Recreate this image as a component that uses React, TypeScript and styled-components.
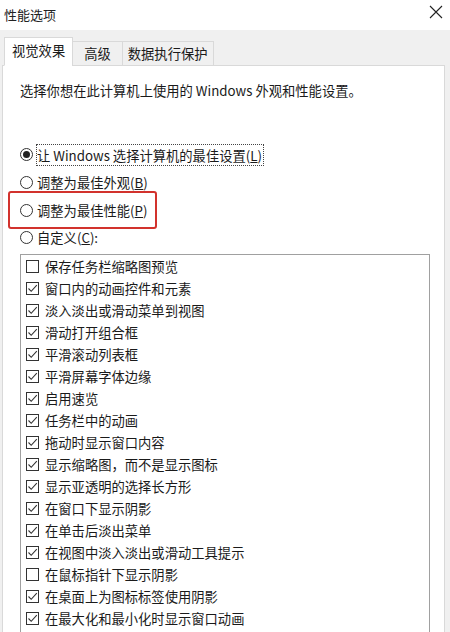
import styled, { createGlobalStyle } from 'styled-components';

const GlobalStyle = createGlobalStyle`
    html, body {
        margin: 0;
        padding: 0;
        width: 450px;
        height: 632px;
        overflow: hidden;
        background: #f0f0f0;
        font-family: "Noto Sans CJK SC", "Noto Sans", sans-serif;
        color: #1a1a1a;
    }
`;

const effects = [
    { label: '保存任务栏缩略图预览', checked: false },
    { label: '窗口内的动画控件和元素', checked: true },
    { label: '淡入淡出或滑动菜单到视图', checked: true },
    { label: '滑动打开组合框', checked: true },
    { label: '平滑滚动列表框', checked: true },
    { label: '平滑屏幕字体边缘', checked: true },
    { label: '启用速览', checked: true },
    { label: '任务栏中的动画', checked: true },
    { label: '拖动时显示窗口内容', checked: true },
    { label: '显示缩略图，而不是显示图标', checked: true },
    { label: '显示亚透明的选择长方形', checked: true },
    { label: '在窗口下显示阴影', checked: true },
    { label: '在单击后淡出菜单', checked: true },
    { label: '在视图中淡入淡出或滑动工具提示', checked: true },
    { label: '在鼠标指针下显示阴影', checked: false },
    { label: '在桌面上为图标标签使用阴影', checked: true },
    { label: '在最大化和最小化时显示窗口动画', checked: true },
];

export default function App() {
    return (
        <>
            <GlobalStyle />
            <Window>
                <TitleBar>
                    <Title>性能选项</Title>
                    <CloseButton>
                        <svg width="14" height="14" viewBox="0 0 14 14">
                            <path d="M1 1 L13 13 M13 1 L1 13" stroke="#222" strokeWidth="1.1" />
                        </svg>
                    </CloseButton>
                </TitleBar>
                <Body>
                    <TabStrip>
                        <Tab $active $pad={7}>视觉效果</Tab>
                        <Tab $pad={11}>高级</Tab>
                        <Tab $pad={5}>数据执行保护</Tab>
                    </TabStrip>
                    <Panel>
                        <Description>选择你想在此计算机上使用的 Windows 外观和性能设置。</Description>
                        <RadioList>
                            <RadioRow>
                                <Radio $checked />
                                <FocusLabel>
                                    让 Windows 选择计算机的最佳设置(<U>L</U>)
                                </FocusLabel>
                            </RadioRow>
                            <RadioRow>
                                <Radio />
                                <span>调整为最佳外观(<U>B</U>)</span>
                            </RadioRow>
                            <RadioRow $highlight>
                                <Radio />
                                <span>调整为最佳性能(<U>P</U>)</span>
                            </RadioRow>
                            <RadioRow>
                                <Radio />
                                <span>自定义(<U>C</U>):</span>
                            </RadioRow>
                        </RadioList>
                        <ListBox>
                            {effects.map((item) => (
                                <CheckRow key={item.label}>
                                    <CheckBox>
                                        {item.checked && (
                                            <svg width="11" height="11" viewBox="0 0 11 11">
                                                <path
                                                    d="M1.5 5.5 L4.2 8.3 L9.8 2.2"
                                                    fill="none"
                                                    stroke="#333"
                                                    strokeWidth="1.1"
                                                />
                                            </svg>
                                        )}
                                    </CheckBox>
                                    <span>{item.label}</span>
                                </CheckRow>
                            ))}
                        </ListBox>
                    </Panel>
                </Body>
            </Window>
        </>
    );
}

const Window = styled.div`
    display: flex;
    flex-direction: column;
    width: 450px;
    height: 632px;
`;

const TitleBar = styled.div`
    height: 30px;
    background: #ffffff;
    display: flex;
    align-items: center;
    justify-content: space-between;
    padding: 0 4px 2px 4px;
    box-sizing: border-box;
`;

const Title = styled.div`
    font-size: 13px;
    color: #222;
`;

const CloseButton = styled.div`
    display: flex;
    align-items: center;
    padding-right: 3px;
    margin-top: -4px;
`;

const Body = styled.div`
    flex: 1;
    display: flex;
    flex-direction: column;
    padding: 0 5px 0 2px;
    min-height: 0;
`;

const TabStrip = styled.div`
    height: 36px;
    display: flex;
    align-items: flex-end;
    padding-left: 2px;
    position: relative;
    z-index: 1;
    margin-bottom: -1px;
`;

const Tab = styled.div<{ $active?: boolean; $pad: number }>`
    box-sizing: border-box;
    height: ${(p) => (p.$active ? '29px' : '25px')};
    padding: ${(p) => (p.$active ? '3px' : '2px')} ${(p) => p.$pad}px 0 ${(p) => p.$pad}px;
    margin-left: ${(p) => (p.$active ? '0' : '-1px')};
    background: ${(p) => (p.$active ? '#ffffff' : '#f0f0f0')};
    border: 1px solid #d9d9d9;
    border-bottom: ${(p) => (p.$active ? '1px solid #ffffff' : '1px solid #d9d9d9')};
    font-size: 13.3px;
    line-height: 20px;
    color: #1a1a1a;
`;

const Panel = styled.div`
    flex: 1;
    background: #ffffff;
    border: 1px solid #d9d9d9;
    border-bottom: none;
    padding: 16px 0 0 17px;
    min-height: 0;
    overflow: hidden;
`;

const Description = styled.div`
    font-size: 13.3px;
    line-height: 18px;
    color: #1a1a1a;
`;

const RadioList = styled.div`
    display: flex;
    flex-direction: column;
    margin-top: 41px;
`;

const RadioRow = styled.div<{ $highlight?: boolean }>`
    position: relative;
    height: 27.7px;
    display: flex;
    align-items: center;
    gap: 4px;
    font-size: 13.3px;
    color: #1a1a1a;

    ${(p) =>
        p.$highlight &&
        `
        &::after {
            content: '';
            position: absolute;
            left: -12px;
            top: -5px;
            width: 145px;
            height: 34px;
            border: 2px solid #d2322d;
            border-radius: 3px;
            pointer-events: none;
        }
    `}
`;

const Radio = styled.span<{ $checked?: boolean }>`
    box-sizing: border-box;
    width: 13px;
    height: 13px;
    border: 1px solid #333;
    border-radius: 50%;
    display: flex;
    align-items: center;
    justify-content: center;
    flex-shrink: 0;

    &::before {
        content: '';
        width: 7px;
        height: 7px;
        border-radius: 50%;
        background: ${(p) => (p.$checked ? '#222' : 'transparent')};
    }
`;

const FocusLabel = styled.span`
    outline: 1px dotted #444;
    outline-offset: 0;
    padding: 1px 1px 0 0;
    line-height: 19px;
`;

const U = styled.span`
    text-decoration: underline;
`;

const ListBox = styled.div`
    margin-top: 2px;
    width: 410px;
    height: 420px;
    box-sizing: border-box;
    border: 1px solid #a0a0a0;
    background: #ffffff;
    padding: 1px 0 0 5px;
    display: flex;
    flex-direction: column;
`;

const CheckRow = styled.div`
    height: 22px;
    display: flex;
    align-items: center;
    gap: 6px;
    font-size: 13.3px;
    color: #1a1a1a;
    flex-shrink: 0;
`;

const CheckBox = styled.span`
    box-sizing: border-box;
    width: 13px;
    height: 13px;
    border: 1px solid #333;
    display: flex;
    align-items: center;
    justify-content: center;
    flex-shrink: 0;
`;
